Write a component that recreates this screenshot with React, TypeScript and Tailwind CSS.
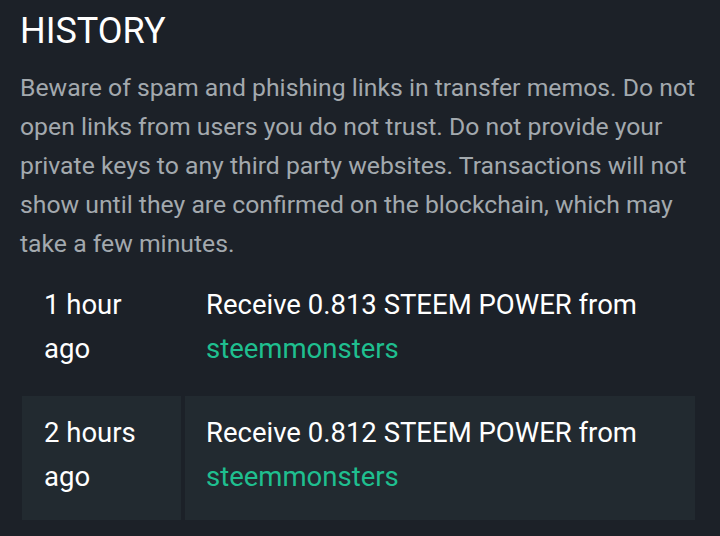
import React from 'react'

type Tx = {
  id: number
  when: string
  text: string
  from: string
}

const history: Tx[] = [
  { id: 1, when: '1 hour ago', text: 'Receive 0.813 STEEM POWER from', from: 'steemmonsters' },
  { id: 2, when: '2 hours ago', text: 'Receive 0.812 STEEM POWER from', from: 'steemmonsters' },
]

export default function App() {
  return (
    <div className="min-h-[536px] w-[720px] bg-[#1c2128] font-['Roboto',sans-serif] overflow-hidden">
      <div className="pl-5 pr-1 pt-[9px]">
        <h2 className="text-[36px] leading-[44px] text-white">HISTORY</h2>
        <p className="mt-[15px] text-[24.75px] leading-[39px] text-[#a3a9ae]">
          Beware of spam and phishing links in transfer memos. Do not open links from users you do
          not trust. Do not provide your private keys to any third party websites. Transactions will
          not show until they are confirmed on the blockchain, which may take a few minutes.
        </p>
        <div className="mt-[5px] ml-[2px] mr-[21px] flex flex-col gap-[4px]">
          {history.map((tx, i) => (
            <div key={tx.id} className="flex gap-[4px] text-[27.5px] leading-[44px] text-white">
              <div
                className={
                  'w-[159px] shrink-0 pl-[22px] pr-4 pt-[15px] pb-[21px] ' +
                  (i % 2 === 1 ? 'bg-[#222a30]' : '')
                }
              >
                {tx.when}
              </div>
              <div
                className={
                  'flex-1 pl-[21px] pr-3 pt-[15px] pb-[21px] ' + (i % 2 === 1 ? 'bg-[#222a30]' : '')
                }
              >
                {tx.text} <span className="text-[#1fbf8f]">{tx.from}</span>
              </div>
            </div>
          ))}
        </div>
      </div>
    </div>
  )
}
